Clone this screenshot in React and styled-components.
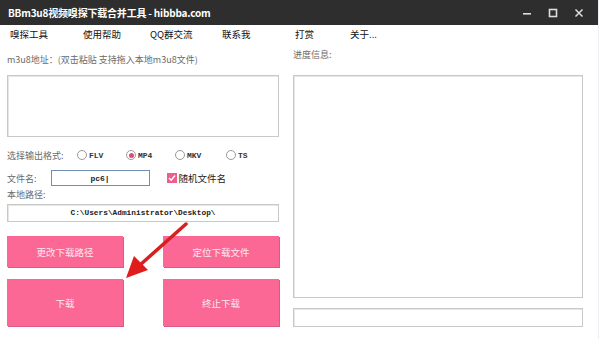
import React from "react";
import styled, { createGlobalStyle } from "styled-components";

const Global = createGlobalStyle`
  html, body { margin: 0; padding: 0; background: #fff; }
  body { font-family: "Noto Sans CJK SC", "Liberation Sans", sans-serif; }
`;

const Window = styled.div`
  width: 599px;
  height: 339px;
  background: #fff;
  position: relative;
  overflow: hidden;
  border-right: 1px solid #f0eef4;
  box-sizing: border-box;
`;

const TitleBar = styled.div`
  height: 25px;
  background: #2e2e2e;
  display: flex;
  align-items: center;
  padding-left: 8px;
  color: #fff;
`;

const Title = styled.div`
  flex: 1;
  font-family: "Noto Sans CJK SC", sans-serif;
  font-weight: 700;
  font-size: 10px;
  letter-spacing: -0.2px;
`;

const Controls = styled.div`
  display: flex;
  align-items: center;
  margin-right: 6px;
`;

const Ctrl = styled.div`
  width: 26px;
  height: 25px;
  display: flex;
  align-items: center;
  justify-content: center;
`;

const Menu = styled.div`
  height: 17px;
  display: flex;
  align-items: center;
  padding-left: 10px;
  font-size: 9.5px;
  color: #111;
`;

const MenuItem = styled.div`
  width: ${(p) => p.w}px;
`;

const Body = styled.div`
  display: flex;
  padding: 0 15px 0 7px;
  gap: 14px;
`;

const Left = styled.div`
  width: 272px;
  display: flex;
  flex-direction: column;
`;

const Right = styled.div`
  flex: 1;
  display: flex;
  flex-direction: column;
`;

const Label = styled.div`
  font-size: 9px;
  color: #6a6a6a;
  height: ${(p) => p.h || 14}px;
  line-height: ${(p) => p.h || 14}px;
  margin-top: ${(p) => p.mt || 0}px;
`;

const Box = styled.div`
  border: 1px solid #c9c9c9;
  box-shadow: inset 1px 1px 0 #e6e6e6;
  background: #fff;
  height: ${(p) => p.h}px;
  margin-top: ${(p) => p.mt || 0}px;
  box-sizing: border-box;
`;

const Row = styled.div`
  display: flex;
  align-items: center;
  height: ${(p) => p.h}px;
  margin-top: ${(p) => p.mt || 0}px;
  font-size: 9px;
  color: #6a6a6a;
`;

const Radio = styled.div`
  display: flex;
  align-items: center;
  width: ${(p) => p.w}px;
  font-family: "Liberation Mono", monospace;
  font-weight: 700;
  font-size: 8px;
  color: #333;
`;

const Dot = styled.span`
  width: 10px;
  height: 10px;
  border-radius: 50%;
  border: 1px solid #9a9a9a;
  box-sizing: border-box;
  margin-right: 2px;
  display: flex;
  align-items: center;
  justify-content: center;
  background: #fff;
  &::after {
    content: "";
    width: 5px;
    height: 5px;
    border-radius: 50%;
    background: ${(p) => (p.on ? "#e8457f" : "transparent")};
  }
`;

const Input = styled.div`
  width: 99px;
  height: 16px;
  border: 1px solid #6f8fb0;
  box-sizing: border-box;
  margin-left: 14px;
  display: flex;
  align-items: center;
  justify-content: center;
  font-family: "Liberation Mono", monospace;
  font-weight: 700;
  font-size: 8px;
  color: #222;
`;

const Check = styled.div`
  display: flex;
  align-items: center;
  margin-left: 17px;
  font-size: 9.5px;
  color: #222;
`;

const CheckBox = styled.span`
  width: 10px;
  height: 10px;
  background: #ec5e8f;
  margin-right: 2px;
  display: flex;
  align-items: center;
  justify-content: center;
`;

const Path = styled(Box)`
  display: flex;
  align-items: center;
  justify-content: center;
  font-family: "Liberation Mono", monospace;
  font-weight: 700;
  font-size: 7.8px;
  color: #222;
`;

const Buttons = styled.div`
  display: grid;
  grid-template-columns: 116px 116px;
  grid-template-rows: 31px 47px;
  column-gap: 40px;
  row-gap: 12px;
  margin-top: 14px;
`;

const Btn = styled.div`
  background: #fb6895;
  color: #fde9f0;
  font-size: 9.5px;
  display: flex;
  align-items: center;
  justify-content: center;
  box-shadow: 1px 1px 0 #d95a82;
`;

const Arrow = styled.svg`
  position: absolute;
  left: 118px;
  top: 218px;
`;

export default function App() {
  return (
    <>
      <Global />
      <Window>
        <TitleBar>
          <Title>BBm3u8视频嗅探下载合并工具 - hibbba.com</Title>
          <Controls>
            <Ctrl>
              <svg width="10" height="10"><rect x="1" y="5" width="8" height="1.6" fill="#ddd" /></svg>
            </Ctrl>
            <Ctrl>
              <svg width="10" height="10"><rect x="1.5" y="1.5" width="7" height="7" fill="none" stroke="#ddd" strokeWidth="1.6" /></svg>
            </Ctrl>
            <Ctrl>
              <svg width="10" height="10"><path d="M1.5 1.5 L8.5 8.5 M8.5 1.5 L1.5 8.5" stroke="#ddd" strokeWidth="1.5" /></svg>
            </Ctrl>
          </Controls>
        </TitleBar>
        <Menu>
          <MenuItem w={73}>嗅探工具</MenuItem>
          <MenuItem w={67}>使用帮助</MenuItem>
          <MenuItem w={72}>QQ群交流</MenuItem>
          <MenuItem w={73}>联系我</MenuItem>
          <MenuItem w={55}>打赏</MenuItem>
          <MenuItem w={60}>关于...</MenuItem>
        </Menu>
        <Body>
          <Left>
            <Label mt={11}>m3u8地址：(双击粘贴 支持拖入本地m3u8文件)</Label>
            <Box h={62} mt={8} />
            <Row h={18} mt={9}>
              <span style={{ width: 70 }}>选择输出格式:</span>
              <Radio w={49}><Dot />FLV</Radio>
              <Radio w={49}><Dot on />MP4</Radio>
              <Radio w={51}><Dot />MKV</Radio>
              <Radio w={40}><Dot />TS</Radio>
            </Row>
            <Row h={16} mt={6}>
              <span>文件名:</span>
              <Input>pc6|</Input>
              <Check>
                <CheckBox>
                  <svg width="8" height="8"><path d="M1 4 L3.2 6.2 L7 1.5" stroke="#fff" strokeWidth="1.4" fill="none" /></svg>
                </CheckBox>
                随机文件名
              </Check>
            </Row>
            <Label h={14} mt={2}>本地路径:</Label>
            <Path h={18} mt={2}>C:\Users\Administrator\Desktop\</Path>
            <Buttons>
              <Btn>更改下载路径</Btn>
              <Btn>定位下载文件</Btn>
              <Btn>下载</Btn>
              <Btn>终止下载</Btn>
            </Buttons>
          </Left>
          <Right>
            <Label mt={6}>进度信息:</Label>
            <Box h={223} mt={13} />
            <Box h={19} mt={10} />
          </Right>
        </Body>
        <Arrow width="80" height="70" viewBox="0 0 80 70">
          <path d="M68 6 L22 47" stroke="#d81f1f" strokeWidth="3.5" strokeLinecap="round" />
          <path d="M8 60 L16 38 L30 52 Z" fill="#e01c1c" />
        </Arrow>
      </Window>
    </>
  );
}
